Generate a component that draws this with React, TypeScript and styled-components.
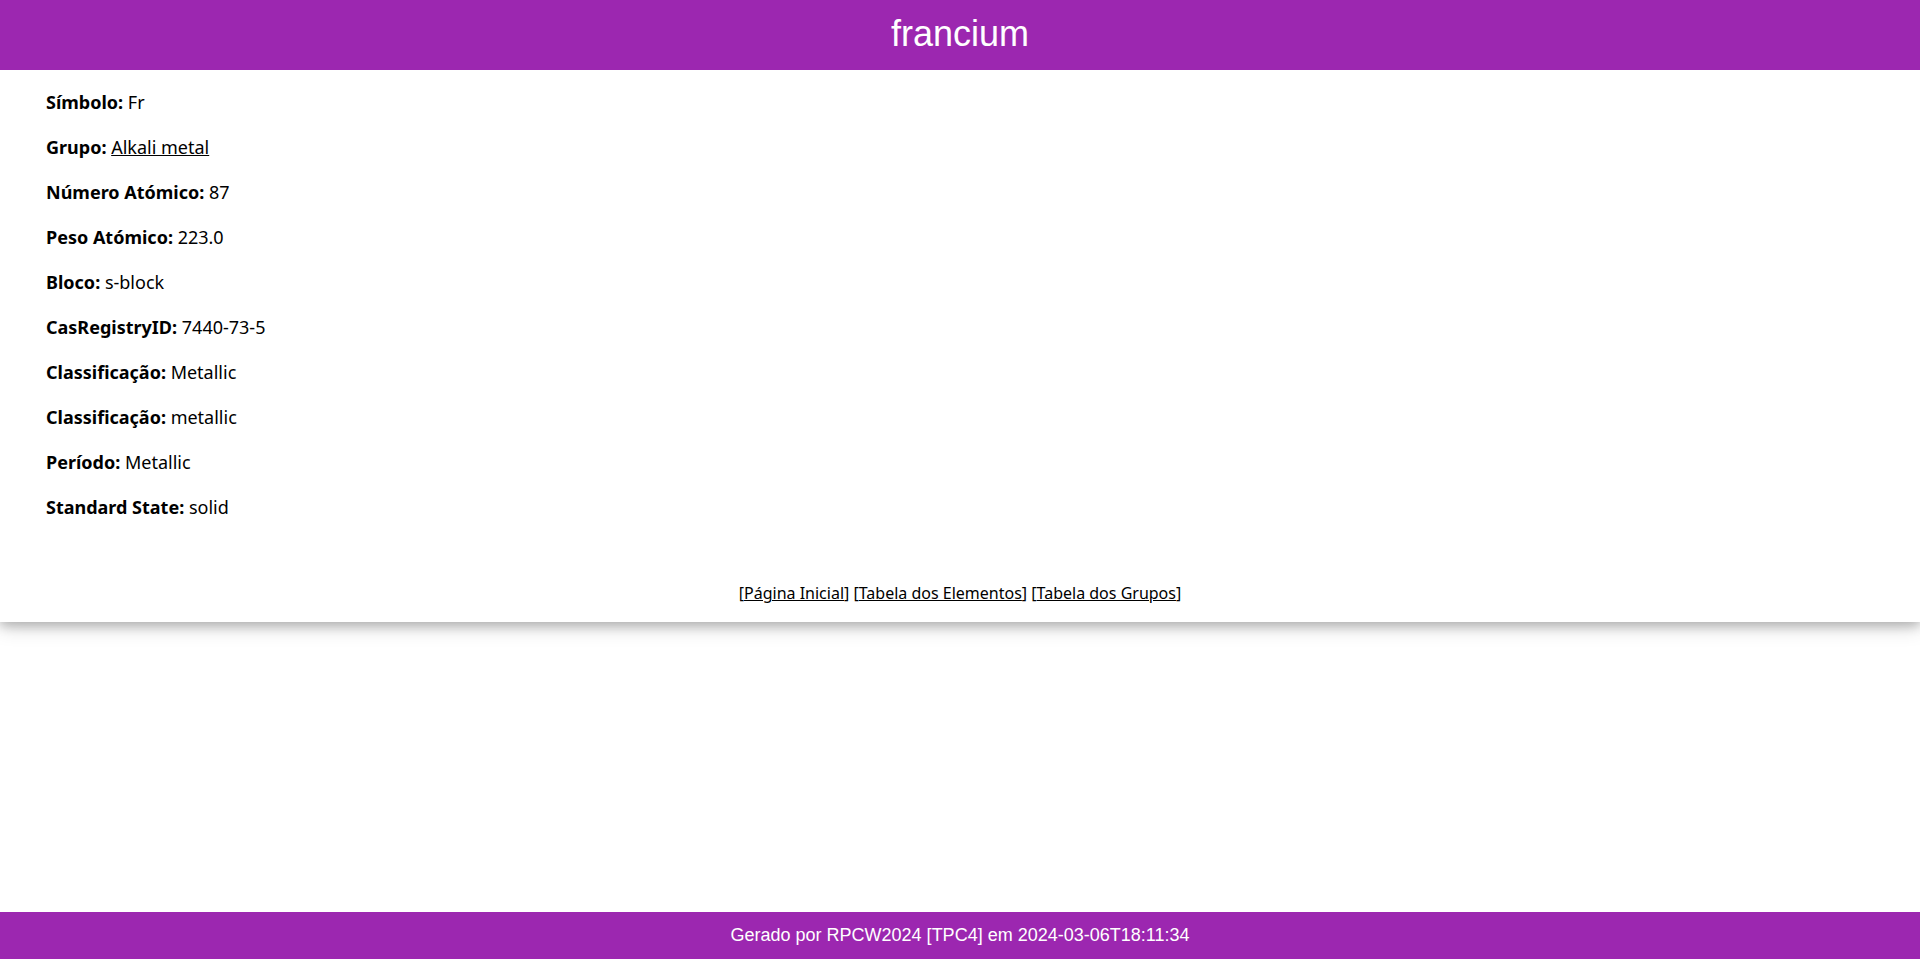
import React from "react";
import styled, { createGlobalStyle } from "styled-components";

const GlobalStyle = createGlobalStyle`
  html, body {
    margin: 0;
    padding: 0;
    background: #ffffff;
    color: #000000;
    font-family: "Noto Sans", "Open Sans", sans-serif;
    font-size: 15px;
    line-height: 1.5;
  }
  * { box-sizing: border-box; }
`;

const Page = styled.div`
  min-height: 959px;
  display: flex;
  flex-direction: column;
`;

const Card = styled.div`
  background: #ffffff;
  box-shadow: 0 4px 10px 0 rgba(0, 0, 0, 0.2), 0 4px 20px 0 rgba(0, 0, 0, 0.19);
`;

const Header = styled.header`
  background: #9c27b0;
  color: #ffffff;
  padding: 0.01em 16px;
  text-align: center;
`;

const Title = styled.h1`
  margin: 9px 0 11px;
  font-family: "Liberation Sans", Arial, sans-serif;
  font-size: 36px;
  font-weight: 400;
  line-height: 50px;
`;

const Details = styled.div`
  padding: 1px 46px 26px;
  font-size: 18px;
  line-height: 27px;
`;

const Field = styled.p`
  margin: 18px 0;
`;

const Label = styled.b`
  font-weight: 700;
`;

const Link = styled.a`
  color: #000000;
  text-decoration: underline;
`;

const Nav = styled.address`
  padding: 0.01em 16px;
  text-align: center;
  font-style: normal;
  font-size: 16px;
  line-height: 24px;
`;

const NavLine = styled.p`
  margin: 16px 0;
`;

const Spacer = styled.div`
  flex: 1;
`;

const Footer = styled.footer`
  background: #9c27b0;
  color: #ffffff;
  padding: 0.01em 16px;
  text-align: center;
`;

const FooterText = styled.h5`
  margin: 10px 0;
  font-family: "Liberation Sans", Arial, sans-serif;
  font-size: 18px;
  font-weight: 400;
  line-height: 27px;
`;

const fields: { label: string; value: string; link?: boolean }[] = [
  { label: "Símbolo", value: "Fr" },
  { label: "Grupo", value: "Alkali metal", link: true },
  { label: "Número Atómico", value: "87" },
  { label: "Peso Atómico", value: "223.0" },
  { label: "Bloco", value: "s-block" },
  { label: "CasRegistryID", value: "7440-73-5" },
  { label: "Classificação", value: "Metallic" },
  { label: "Classificação", value: "metallic" },
  { label: "Período", value: "Metallic" },
  { label: "Standard State", value: "solid" },
];

export default function App() {
  return (
    <>
      <GlobalStyle />
      <Page>
        <Card>
          <Header>
            <Title>francium</Title>
          </Header>
          <Details>
            {fields.map((f, i) => (
              <Field key={i}>
                <Label>{f.label}:</Label>{" "}
                {f.link ? <Link href="#">{f.value}</Link> : f.value}
              </Field>
            ))}
          </Details>
          <Nav>
            <NavLine>
              [<Link href="#">Página Inicial</Link>] [
              <Link href="#">Tabela dos Elementos</Link>] [
              <Link href="#">Tabela dos Grupos</Link>]
            </NavLine>
          </Nav>
        </Card>
        <Spacer />
        <Footer>
          <FooterText>Gerado por RPCW2024 [TPC4] em 2024-03-06T18:11:34</FooterText>
        </Footer>
      </Page>
    </>
  );
}
